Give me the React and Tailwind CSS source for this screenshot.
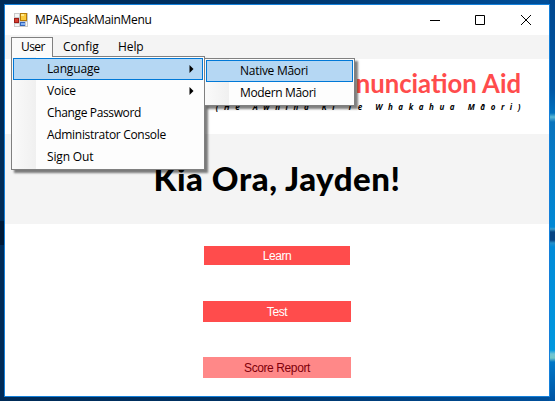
import React from "react";

const menuItems = [
  { label: "Language", arrow: true, active: true, cls: "tracking-[-0.15px]" },
  { label: "Voice", arrow: true, cls: "tracking-[-0.2px]" },
  { label: "Change Password", cls: "tracking-[-0.36px]" },
  { label: "Administrator Console", cls: "tracking-[-0.31px]" },
  { label: "Sign Out", cls: "tracking-[-0.15px]" },
];

function AppIcon() {
  return (
    <svg width="14" height="14" viewBox="0 0 14 14" shapeRendering="crispEdges">
      <path d="M0 0h14v14H0z" fill="#c9c9c9" />
      <path d="M1 1h4v3H1zM1 11h4v2H1zM12 9h1v4h-1z" fill="#f5f5f5" />
      <path d="M6 0h7v8H6z" fill="#b57b08" />
      <path d="M7 1h5v6H7z" fill="#fbc93a" />
      <path d="M7 1h3v2H7z" fill="#ffe88a" />
      <path d="M0 5h5v5H0z" fill="#9c1c18" />
      <path d="M1 6h3v3H1z" fill="#d8402f" />
      <path d="M6 9h5v4H6z" fill="#3465ba" />
      <path d="M7 10h4v2H7z" fill="#83b1f3" />
    </svg>
  );
}

function Arrow() {
  return (
    <svg className="ml-auto mr-[8px]" width="5" height="8" viewBox="0 0 5 8">
      <path d="M0.5 0L4.5 4L0.5 8Z" fill="#000" />
    </svg>
  );
}

function MenuRow({ label, arrow, active, cls }) {
  return (
    <div
      className={
        "flex h-[22px] items-center border pl-[33px] " +
        (active ? "border-[#0078d7] bg-[#b5d7f3]" : "border-transparent")
      }
    >
      <span className={"whitespace-nowrap " + cls}>{label}</span>
      {arrow && <Arrow />}
    </div>
  );
}

export default function App() {
  return (
    <div className="relative h-[401px] w-[555px] overflow-hidden bg-[linear-gradient(90deg,#002b57_0%,#003265_45%,#00509c_100%)] p-1 font-['Open_Sans','Noto_Sans',sans-serif] text-[12px] text-black">
      <div className="absolute right-0 top-0 h-full w-[6px] bg-[linear-gradient(180deg,#00478f_0px,#0057a5_90px,#0072be_113px,#5ab8d4_117px,#0873bd_122px,#0089d5_227px,#3a9ccb_229px,#064483_232px,#064483_240px,#2591ca_243px,#008bd8_247px,#0098df_350px,#6fc4d5_354px,#73c7c6_358px,#0077c8_362px,#0054a2_401px)]" />
      <div className="absolute left-0 top-[221px] h-[24px] w-1 bg-[#001936]" />

      <div className="relative flex h-[393px] w-[546px] flex-col border border-[#1480da] bg-white">
        <div className="flex h-[30px] shrink-0 items-center">
          <div className="ml-[9px] h-[14px]">
            <AppIcon />
          </div>
          <span className="ml-[7px] tracking-[-0.35px]">MPAiSpeakMainMenu</span>
          <svg className="ml-auto mr-[17px]" width="103" height="12" viewBox="0 0 103 12" fill="none" stroke="#000">
            <path d="M1 6.5h10" />
            <path d="M46.5 1.5h9v9h-9z" />
            <path d="M92 1l10 10M102 1l-10 10" />
          </svg>
        </div>

        <div className="relative flex h-6 shrink-0 items-start bg-[#f4f4f4] pl-[6px] pt-[2px]">
          <div className="flex h-[20px] w-[42px] items-center border border-b-0 border-[#808080] bg-[#fafafa] pb-px pl-[9px] tracking-[-0.6px]">
            User
          </div>
          <div className="ml-[10px] flex h-[20px] w-[55px] items-center">Config</div>
          <div className="flex h-[20px] items-center tracking-[-0.1px]">Help</div>

          <div className="absolute left-[6px] top-[21px] z-10 h-[114px] w-[194px] border border-[#808080] bg-[linear-gradient(90deg,#fafafa_0px,#f0f0f0_24px,#fdfdfd_24px)] p-px shadow-[3px_3px_2px_rgba(0,0,0,0.5)]">
            {menuItems.map((item) => (
              <MenuRow key={item.label} {...item} />
            ))}
          </div>
          <div className="absolute left-[7px] top-[21px] z-20 h-px w-[40px] bg-[#fafafa]" />

          <div className="absolute left-[199px] top-[23px] z-20 h-[48px] w-[151px] border border-[#808080] bg-[linear-gradient(90deg,#fafafa_0px,#f0f0f0_24px,#fdfdfd_24px)] p-px shadow-[3px_3px_2px_rgba(0,0,0,0.5)]">
            <MenuRow label="Native Māori" active cls="tracking-[-0.28px]" />
            <MenuRow label="Modern Māori" cls="tracking-[-0.35px]" />
          </div>
        </div>

        <div className="flex h-[75px] shrink-0 flex-col items-end pr-[28px] pt-[9px] text-right">
          <div className="whitespace-nowrap font-['Lato',sans-serif] text-[25.7px] font-bold leading-[31px] text-[#ff4c4c]">
            Pronunciation Aid
          </div>
          <div className="mr-[-5px] whitespace-nowrap text-[8px] font-bold italic leading-[15px] tracking-[5.55px]">
            (He Awhina Ki Te Whakahua Māori)
          </div>
        </div>

        <div className="flex h-[90px] shrink-0 items-center justify-center bg-[#f4f4f4] pb-px font-['Lato',sans-serif] text-[33px] font-black leading-none tracking-[0.55px]">
          Kia Ora, Jayden!
        </div>

        <div className="flex flex-col items-center pt-[22px] font-['Liberation_Sans',Arial,sans-serif] text-[12px] tracking-[-0.4px]">
          <div className="flex h-[19px] w-[146px] items-center justify-center bg-[#ff4c4c] text-white">Learn</div>
          <div className="mt-[36px] flex h-[21px] w-[148px] items-center justify-center bg-[#ff4c4c] text-white">Test</div>
          <div className="mt-[35px] flex h-[21px] w-[148px] items-center justify-center bg-[#ff8888] text-[#80000b]">Score Report</div>
        </div>
      </div>
    </div>
  );
}
